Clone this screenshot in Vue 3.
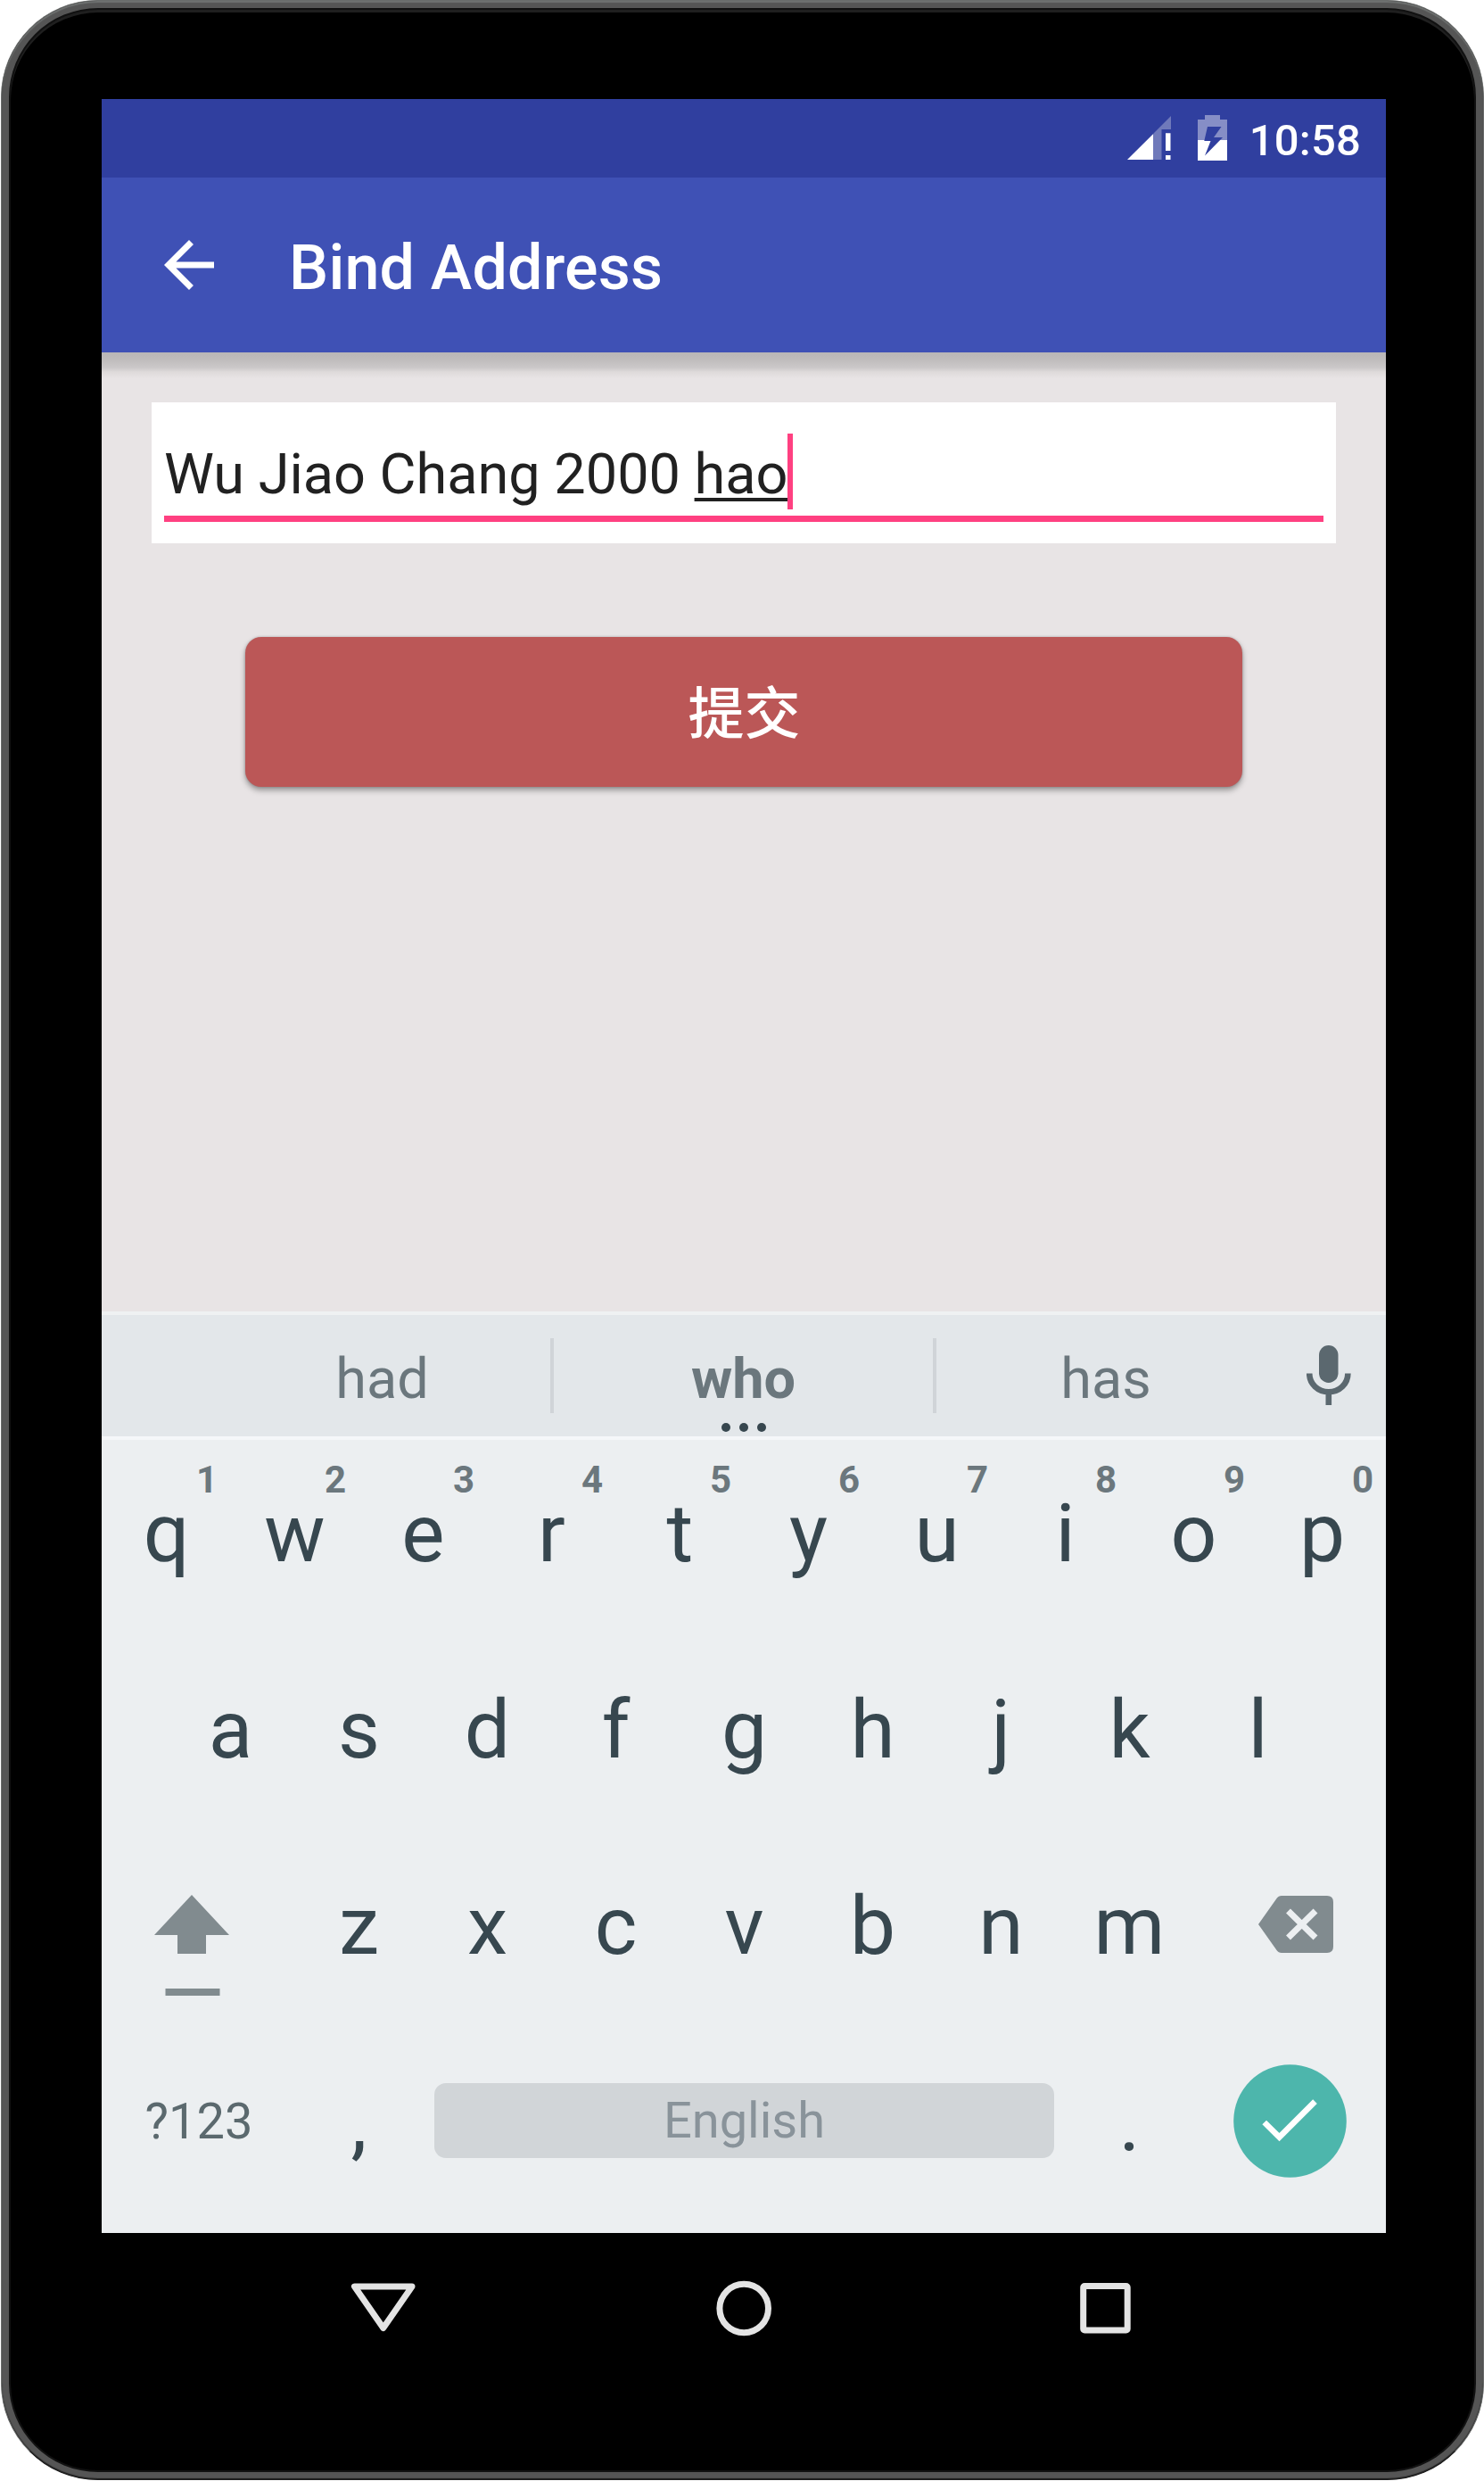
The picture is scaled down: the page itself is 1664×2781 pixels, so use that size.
<script setup>
const numberRow = [...'qwertyuiop'].map((letter, i) => ({ letter, hint: (i + 1) % 10 }))
const homeRow = [...'asdfghjkl']
const bottomRow = [...'zxcvbnm']
</script>

<template>
  <div class="device">
    <div class="display">
      <header class="status-bar">
        <svg class="signal" viewBox="0 0 49 49">
          <path d="M29.5 19.5L49 0V15H38.5V49H29.5Z" fill="#6f79ba" />
          <path d="M0 49L29.2 20V49ZM43 19.3h5.5V39H43ZM43 44h5.5v5H43Z" fill="#fff" />
        </svg>
        <svg class="battery" viewBox="0 0 33 51">
          <path d="M0 28V5H8V0H25V5H33V28Z" fill="#868ec6" />
          <path d="M0 28H33V51H0Z" fill="#fff" />
          <path d="M11 13H26.5L18 25H28L8 45.5L14.5 29H7.3Z" fill="#303f9f" />
        </svg>
        <span class="clock">10:58</span>
      </header>

      <div class="app-bar">
        <svg class="back" viewBox="0 0 24 24">
          <path d="M20 11H7.83l5.59-5.59L12 4l-8 8 8 8 1.41-1.41L7.83 13H20v-2z" fill="#fff" />
        </svg>
        <h1>Bind Address</h1>
      </div>

      <main class="content">
        <div class="field">
          <div class="field-text">
            <span class="typed">Wu Jiao Chang 2000 <span class="composing">hao</span></span>
            <i class="caret"></i>
          </div>
        </div>
        <button class="submit">提交</button>
      </main>

      <section class="keyboard">
        <div class="suggestions">
          <span class="word side">had</span>
          <span class="word best">who
            <span class="dots"><i></i><i></i><i></i></span>
          </span>
          <span class="word side last">has</span>
          <svg class="mic" viewBox="0 0 50 68">
            <rect x="14" y="0" width="21.5" height="42" rx="10.7" fill="#5b686f" />
            <path d="M3.2 31.5C3.2 43.5 13 52.3 24.8 52.3S46.4 43.5 46.4 31.5M24.8 52V67" fill="none" stroke="#5b686f" stroke-width="6.6" />
          </svg>
        </div>

        <div class="row">
          <div v-for="key in numberRow" :key="key.letter" class="key">
            {{ key.letter }}<small>{{ key.hint }}</small>
          </div>
        </div>
        <div class="row">
          <div v-for="letter in homeRow" :key="letter" class="key">{{ letter }}</div>
        </div>
        <div class="row">
          <div class="wide">
            <svg class="shift" viewBox="0 0 84 114">
              <path d="M42 0L84 45H58V66H26V45H0ZM12.5 105H73.5V113H12.5Z" fill="#818b8f" />
            </svg>
          </div>
          <div v-for="letter in bottomRow" :key="letter" class="key">{{ letter }}</div>
          <div class="wide">
            <svg class="delete" viewBox="0 0 84 64">
              <path d="M0 32L20.5 3Q22.5 0 26 0H77Q84 0 84 7V57Q84 64 77 64H26Q22.5 64 20.5 61Z" fill="#818b8f" />
              <path d="M33.5 17L64 47M64 17L33.5 47" stroke="#eceff1" stroke-width="7" />
            </svg>
          </div>
        </div>
        <div class="row">
          <div class="wide symbols">?123</div>
          <div class="key">,</div>
          <div class="space"><span>English</span></div>
          <div class="key">.</div>
          <div class="wide">
            <svg class="enter" viewBox="0 0 127 127">
              <circle cx="63.5" cy="63.5" r="63.3" fill="#4db6ac" />
              <path d="M34.7 65L51.5 81.7L91.5 41.7" fill="none" stroke="#fff" stroke-width="6.6" />
            </svg>
          </div>
        </div>
      </section>
    </div>

    <nav class="nav-bar">
      <svg viewBox="0 0 84 84"><path d="M10.5 18H75L42.75 64.5Z" /></svg>
      <svg viewBox="0 0 84 84"><circle cx="42.2" cy="42.5" r="27.3" /></svg>
      <svg viewBox="0 0 84 84"><rect x="17.7" y="17.5" width="49.5" height="49.5" rx="1.5" /></svg>
    </nav>
  </div>
</template>

<style>
body {
  margin: 0;
  background: #fff;
}
</style>

<style scoped>
.device {
  box-sizing: border-box;
  width: 1663px;
  height: 2780px;
  margin-left: 1px;
  padding: 110px 0 0 112px;
  border: 1px solid #6a6c6b;
  border-bottom-color: #1c1c1c;
  border-radius: 109px;
  background: #000;
  box-shadow: inset 0 2px 1px #6e7170, inset 0 -1px 1px #1c1c1c, inset 0 0 0 8px #555,
    inset 0 0 0 10px #111, inset 0 3px 0 10px #1f1f1f;
  font-family: Roboto, "Noto Sans CJK SC", sans-serif;
}

.display {
  display: flex;
  flex-direction: column;
  width: 1440px;
  height: 2392px;
  overflow: hidden;
  background: #e8e4e5;
}

.status-bar {
  display: flex;
  align-items: flex-start;
  justify-content: flex-end;
  box-sizing: border-box;
  flex: 0 0 88px;
  padding-right: 28px;
  background: #303f9f;
}
.signal {
  width: 49px;
  height: 49px;
  margin: 19px 30px 0 0;
}
.battery {
  width: 33px;
  height: 51px;
  margin: 18px 25px 0 0;
}
.clock {
  padding-top: 18px;
  color: #fff;
  font-size: 49px;
  font-weight: 500;
  letter-spacing: 0.2px;
  line-height: 57px;
}

.app-bar {
  display: flex;
  align-items: center;
  box-sizing: border-box;
  flex: 0 0 196px;
  padding-left: 56px;
  background: #3f51b5;
}
.back {
  width: 84px;
  height: 84px;
}
h1 {
  margin: 6px 0 0 70px;
  color: #fff;
  font-size: 70px;
  font-weight: 500;
  letter-spacing: 0.2px;
  line-height: 82px;
}

.content {
  display: flex;
  flex-direction: column;
  align-items: center;
  box-sizing: border-box;
  flex: 1;
  padding-top: 56px;
  background: linear-gradient(#b9b6b6, #bfbcbc 8px, #cbc8c9 17px, #dedada 22px, #e8e4e5 29px) no-repeat;
}
.field {
  box-sizing: border-box;
  width: 1328px;
  height: 158px;
  padding: 35px 14px 24px;
  background: #fff;
}
.field-text {
  display: flex;
  box-sizing: border-box;
  height: 99px;
  border-bottom: 7px solid #ff4081;
}
.typed {
  color: #212121;
  font-size: 63px;
  line-height: 91px;
  white-space: pre;
}
.composing {
  text-decoration: underline;
  text-decoration-thickness: 4px;
  text-underline-offset: 5px;
  text-decoration-skip-ink: none;
}
.caret {
  width: 6px;
  height: 85px;
  margin-left: -1px;
  background: #ff4081;
}
.submit {
  width: 1118px;
  height: 168px;
  margin-top: 105px;
  padding: 0 0 7px 1px;
  border: 0;
  border-radius: 18px;
  background: #bb5757;
  box-shadow: 0 4px 6px rgba(0, 0, 0, 0.34), 0 0 3px rgba(0, 0, 0, 0.2);
  color: #fff;
  font-family: "Noto Sans CJK SC", sans-serif;
  font-size: 63px;
  font-weight: 500;
}

.keyboard {
  flex: 0 0 1033px;
  background: #eceff1;
  color: #37474f;
}
.suggestions {
  display: flex;
  align-items: center;
  box-sizing: border-box;
  height: 144px;
  padding-left: 126px;
  border-top: 4px solid #eff1f2;
  border-bottom: 4px solid #f5f7f9;
  background: #e3e7ea;
}
.word {
  height: 84px;
  color: #6b777d;
  font-size: 63px;
  line-height: 91px;
  text-align: center;
}
.side {
  width: 377px;
}
.last {
  box-sizing: border-box;
  padding-left: 3px;
}
.best {
  position: relative;
  box-sizing: border-box;
  width: 433px;
  border: solid #d0d4d8;
  border-width: 0 4px;
  font-weight: 700;
}
.dots {
  position: absolute;
  top: 95px;
  left: 0;
  right: 0;
  display: flex;
  justify-content: center;
  gap: 10px;
}
.dots i {
  width: 10px;
  height: 10px;
  border-radius: 50%;
  background: #37474f;
}
.mic {
  width: 50px;
  height: 68px;
  margin: 0 0 1px 38px;
}

.row {
  display: flex;
  justify-content: center;
  height: 220px;
}
.key {
  position: relative;
  box-sizing: border-box;
  width: 144px;
  padding: 52px 0 0 1px;
  font-size: 91px;
  line-height: 106px;
  text-align: center;
}
.key small {
  position: absolute;
  top: 20px;
  right: 14px;
  color: #6b777d;
  font-size: 42px;
  font-weight: 700;
  line-height: 49px;
}
.wide {
  display: flex;
  justify-content: center;
  align-items: flex-start;
  width: 216px;
}
.shift {
  width: 84px;
  height: 114px;
  margin: 70px 14px 0 0;
}
.delete {
  width: 84px;
  height: 64px;
  margin: 71px 0 0 14px;
}
.symbols {
  box-sizing: border-box;
  padding: 71px 0 0 2px;
  color: #5b696e;
  font-size: 56px;
  line-height: 66px;
}
.space {
  box-sizing: border-box;
  width: 720px;
  padding: 61px 12px 0 13px;
}
.space span {
  display: block;
  height: 84px;
  border-radius: 13px;
  background: #d1d5d8;
  color: #89939a;
  font-size: 56px;
  line-height: 85px;
  text-align: center;
}
.enter {
  width: 127px;
  height: 127px;
  margin-top: 40px;
}

.nav-bar {
  display: flex;
  align-items: center;
  justify-content: center;
  gap: 321px;
  width: 1440px;
  height: 168px;
}
.nav-bar svg {
  width: 84px;
  height: 84px;
  fill: none;
  stroke: #e4e4e4;
  stroke-width: 7;
  stroke-linejoin: round;
}
</style>
